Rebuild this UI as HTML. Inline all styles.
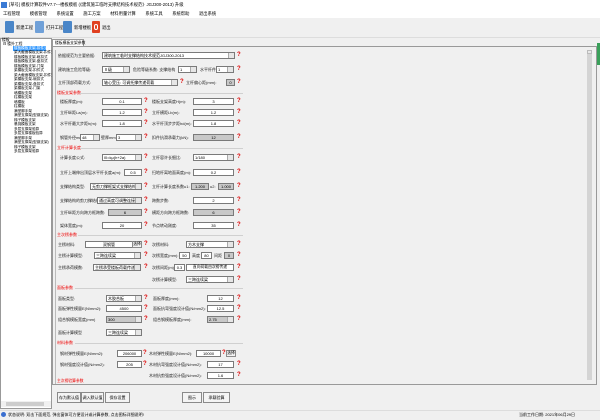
<!DOCTYPE html>
<html><head><meta charset="utf-8">
<style>
*{margin:0;padding:0;box-sizing:border-box}
body{width:600px;height:420px;background:#f0f0f0;position:relative;overflow:hidden;font-family:"Liberation Sans","Noto Sans CJK SC",sans-serif;font-size:4px;color:#000;line-height:1}
div,span{position:absolute;white-space:nowrap}
.l{font-size:4px;color:#222}
.f{background:#fff;border:1px solid #7a7a7a;height:7px;font-size:4px;text-align:center;line-height:5px}
.g{background:#c8c8c8;border:1px solid #7a7a7a;height:7px;font-size:4px;text-align:center;line-height:5px}
.s{background:#fff;border:1px solid #7a7a7a;height:7px;font-size:4px;line-height:5px;padding-left:1px;text-align:left;overflow:hidden}
.s::after{content:"";position:absolute;right:0;top:0;width:5px;height:5px;background:#e6e6e6;border-left:1px solid #aaa}
.q{width:4px;height:7px;color:#d00;font-size:6px;font-weight:bold;line-height:7px}
.sec{color:#e00;font-size:4px}
.gl{height:1px;background:#d0d0d0;left:56px;width:187px}
.tr{font-size:3.6px;left:14px}
.btn{border:1px solid #8a8a8a;background:#f4f4f4;height:11px;font-size:4px;line-height:9px;text-align:center}
</style></head><body>
<!-- title -->
<div style="left:0;top:0;width:600px;height:10px;background:#fff"></div>
<div style="left:1px;top:2px;width:6px;height:6px;background:#3a7bd5"></div>
<div style="left:9px;top:3px;font-size:4.3px">[草号] 模板计算软件V7.7---楼板模板 (《建筑施工临时支撑结构技术规范》JGJ300-2013) 升级</div>
<!-- menu -->
<div style="left:0;top:10px;width:600px;height:8px;background:#fff"></div>
<div style="left:3px;top:12px;font-size:4.3px;word-spacing:2px">工程管理&nbsp;&nbsp; 模板管理&nbsp;&nbsp; 系统设置&nbsp;&nbsp; 施工方案&nbsp;&nbsp; 材料用量计算&nbsp;&nbsp; 系统工具&nbsp;&nbsp; 系统帮助&nbsp;&nbsp; 退出系统</div>
<!-- toolbar -->
<div style="left:0;top:18px;width:600px;height:20px;background:#f0f0f0;border-bottom:1px solid #ddd"></div>
<div style="left:5px;top:21px;width:9px;height:12px;background:#4a86c8;border-radius:1px"></div>
<div style="left:16px;top:26px;font-size:4.3px">新建工程</div>
<div style="left:35px;top:21px;width:9px;height:12px;background:#6fa0d8;border-radius:1px"></div>
<div style="left:46px;top:26px;font-size:4.3px">打开工程</div>
<div style="left:63px;top:21px;width:9px;height:12px;background:#4a86c8;border-radius:1px"></div>
<div style="left:74px;top:26px;font-size:4.3px">新增楼板</div>
<div style="left:92px;top:21px;width:8px;height:12px;background:#e04020;border-radius:1px"></div>
<div style="left:94px;top:24px;width:4px;height:6px;border:1px solid #fff;border-radius:2px"></div>
<div style="left:102px;top:26px;font-size:4.3px">退出</div>
<!-- left tree -->
<div style="left:0;top:38px;width:52px;height:371px;background:#fff;border:1px solid #999"></div>
<div style="left:2px;top:39px;font-size:3.8px">楼板</div>
<div style="left:3px;top:43px;font-size:3.8px">⊟ 楼外工程</div>
<div style="left:13px;top:46px;width:33px;height:5px;background:#3399ff"></div>
<div class="tr" style="top:46.7px;color:#fff">楼板模板支架-扣件式</div>
<div class="tr" style="top:51px">梁大截面模板支架-扣件式</div>
<div class="tr" style="top:55.5px">楼板模板支架-碗扣式</div>
<div class="tr" style="top:60px">楼板模板支架-盘扣式</div>
<div class="tr" style="top:64.5px">楼板模板支架-门架</div>
<div class="tr" style="top:69px">梁模板支架-扣件式</div>
<div class="tr" style="top:73.5px">梁大截面模板支架-扣件式</div>
<div class="tr" style="top:78px">梁模板支架-碗扣式</div>
<div class="tr" style="top:82.5px">梁模板支架-盘扣式</div>
<div class="tr" style="top:87px">梁模板支架-门架</div>
<div class="tr" style="top:91.5px">墙模板支架</div>
<div class="tr" style="top:96px">柱模板支架</div>
<div class="tr" style="top:100.5px">墙模板</div>
<div class="tr" style="top:105px">柱模板</div>
<div class="tr" style="top:109.5px">满堂脚手架</div>
<div class="tr" style="top:114px">满堂支撑架(型钢支架)</div>
<div class="tr" style="top:118.5px">梯子模板支架</div>
<div class="tr" style="top:123px">悬挑模板支架</div>
<div class="tr" style="top:127.5px">多层支撑架验算</div>
<div class="tr" style="top:132px">多层支撑楼板验算</div>
<div class="tr" style="top:136.5px">满堂脚手架</div>
<div class="tr" style="top:141px">满堂支撑架(型钢支架)</div>
<div class="tr" style="top:145.5px">梯子模板支架</div>
<div class="tr" style="top:150px">多层支撑架验算</div>
<div style="left:1px;top:401px;width:50px;height:6px;background:#f0f0f0"></div>
<div style="left:6px;top:402px;width:38px;height:4px;background:#cdcdcd"></div>
<!-- tab -->
<div style="left:52px;top:39px;width:32px;height:8px;background:#fff;border:1px solid #999;border-bottom:none;font-size:3.8px;line-height:6px;padding-left:2px">楼板模板支架参数</div>
<!-- content frame -->
<div style="left:52px;top:46px;width:545px;height:339px;border:1px solid #999;background:#f0f0f0"></div>
<div style="left:587px;top:50px;width:5px;height:330px;background:#d4d4d4"></div>
<div style="left:587px;top:50px;width:5px;height:4px;background:#e8e8e8;border:1px solid #bbb"></div>
<div style="left:597px;top:43px;width:3px;height:22px;background:#3aa05a"></div>
<div style="left:55px;top:50px;width:190px;height:334px;border-left:1px solid #bbb"></div>

<!-- rows -->
<div class="l" style="left:58px;top:54px">依据规范为主要依据:</div>
<div class="s" style="left:102px;top:52px;width:133px">建筑施工临时支撑结构技术规范JGJ300-2013</div><div class="q" style="left:237px;top:52px">?</div>

<div class="l" style="left:58px;top:68px">建筑施工危险等级:</div>
<div class="s" style="left:102px;top:66px;width:28px">Ⅱ级</div>
<div class="l" style="left:133px;top:68px">危险等级系数: 支撑结构</div>
<div class="s" style="left:178px;top:66px;width:19px">1</div>
<div class="l" style="left:200px;top:68px">水平杆件</div>
<div class="s" style="left:216px;top:66px;width:18px">1</div><div class="q" style="left:237px;top:66px">?</div>

<div class="l" style="left:58px;top:81px">立杆顶部荷载方式:</div>
<div class="s" style="left:102px;top:79px;width:76px">轴心受压: 可调托撑传递荷载</div><div class="q" style="left:180px;top:79px">?</div>
<div class="l" style="left:186px;top:81px">立杆偏心距(mm):</div>
<div class="g" style="left:226px;top:79px;width:9px">0</div><div class="q" style="left:237px;top:79px">?</div>

<div class="sec" style="left:57px;top:91px">楼板支架参数</div><div class="gl" style="top:93px;left:80px;width:163px"></div>
<div class="l" style="left:60px;top:100px">楼板厚度(m):</div><div class="f" style="left:102px;top:98px;width:40px">0.1</div><div class="q" style="left:144px;top:98px">?</div>
<div class="l" style="left:152px;top:100px">楼板支架高度H(m):</div><div class="f" style="left:193px;top:98px;width:41px">3</div><div class="q" style="left:237px;top:98px">?</div>
<div class="l" style="left:60px;top:111px">立杆纵距La(m):</div><div class="f" style="left:102px;top:109px;width:40px">1.2</div><div class="q" style="left:144px;top:109px">?</div>
<div class="l" style="left:152px;top:111px">立杆横距Lb(m):</div><div class="f" style="left:193px;top:109px;width:41px">1.2</div><div class="q" style="left:237px;top:109px">?</div>
<div class="l" style="left:60px;top:122px">水平杆最大步距h(m):</div><div class="f" style="left:102px;top:120px;width:40px">1.8</div><div class="q" style="left:144px;top:120px">?</div>
<div class="l" style="left:152px;top:122px">水平杆顶步步距hd(m):</div><div class="f" style="left:193px;top:120px;width:41px">1.8</div><div class="q" style="left:237px;top:120px">?</div>
<div class="l" style="left:60px;top:136px">钢管外径mm</div><div class="s" style="left:80px;top:134px;width:20px">48</div>
<div class="l" style="left:101px;top:136px">壁厚mm</div><div class="s" style="left:116px;top:134px;width:26px">3</div><div class="q" style="left:144px;top:134px">?</div>
<div class="l" style="left:152px;top:136px">扣件抗滑承载力(kN):</div><div class="g" style="left:193px;top:134px;width:41px">12</div><div class="q" style="left:237px;top:134px">?</div>

<div class="sec" style="left:57px;top:146px">立杆计算长度</div><div class="gl" style="top:148px;left:80px;width:163px"></div>
<div class="l" style="left:60px;top:156px">计算长度公式:</div><div class="s" style="left:102px;top:154px;width:40px">l0=kμ(h+2a)</div><div class="q" style="left:144px;top:154px">?</div>
<div class="l" style="left:152px;top:156px">立杆容许长细比:</div><div class="s" style="left:193px;top:154px;width:41px">1/180</div><div class="q" style="left:237px;top:154px">?</div>
<div class="l" style="left:60px;top:171px">立杆上端伸出顶层水平杆长度a(m):</div><div class="f" style="left:124px;top:169px;width:18px">0.5</div><div class="q" style="left:144px;top:169px">?</div>
<div class="l" style="left:152px;top:171px">扫地杆离地面高度(m):</div><div class="f" style="left:193px;top:169px;width:41px">0.2</div><div class="q" style="left:237px;top:169px">?</div>
<div class="l" style="left:60px;top:185px">支撑结构类型:</div><div class="s" style="left:90px;top:183px;width:52px">无剪刀撑框架式支撑结构</div><div class="q" style="left:144px;top:183px">?</div>
<div class="l" style="left:152px;top:185px">立杆计算长度系数u1:</div><div class="g" style="left:191px;top:183px;width:18px">1.200</div>
<div class="l" style="left:210px;top:185px">u2:</div><div class="g" style="left:218px;top:183px;width:16px">1.000</div><div class="q" style="left:237px;top:183px">?</div>
<div class="l" style="left:60px;top:199px">支撑结构的剪刀撑结构</div><div class="s" style="left:97px;top:197px;width:45px">通过高度可调整连接</div><div class="q" style="left:144px;top:197px">?</div>
<div class="l" style="left:152px;top:199px">跨数步数:</div><div class="f" style="left:193px;top:197px;width:41px">2</div><div class="q" style="left:237px;top:197px">?</div>
<div class="l" style="left:60px;top:211px">立杆纵距方向跨方框跨数:</div><div class="g" style="left:108px;top:209px;width:34px">6</div><div class="q" style="left:144px;top:209px">?</div>
<div class="l" style="left:152px;top:211px">横距方向跨方框跨数:</div><div class="g" style="left:193px;top:209px;width:41px">6</div><div class="q" style="left:237px;top:209px">?</div>
<div class="l" style="left:60px;top:224px">架体宽度(m):</div><div class="f" style="left:102px;top:222px;width:40px">20</div><div class="q" style="left:144px;top:222px">?</div>
<div class="l" style="left:152px;top:224px">节点转动刚度:</div><div class="f" style="left:193px;top:222px;width:41px">35</div><div class="q" style="left:237px;top:222px">?</div>

<div class="sec" style="left:57px;top:233px">主次楞参数</div><div class="gl" style="top:235px;left:78px;width:165px"></div>
<div class="l" style="left:58px;top:243px">主楞材料:</div><div class="f" style="left:85px;top:241px;width:48px">双钢管</div>
<div class="btn" style="left:132px;top:241px;width:10px;height:7px;line-height:5px;font-size:3.8px">选择</div><div class="q" style="left:144px;top:241px">?</div>
<div class="l" style="left:152px;top:243px">次楞材料:</div><div class="s" style="left:186px;top:241px;width:48px">方木支撑</div><div class="q" style="left:237px;top:241px">?</div>
<div class="l" style="left:58px;top:254px">主楞计算模型:</div><div class="s" style="left:94px;top:252px;width:47px">三跨连续梁</div><div class="q" style="left:144px;top:252px">?</div>
<div class="l" style="left:152px;top:254px">次楞宽度(mm):</div><div class="f" style="left:179px;top:252px;width:11px">50</div>
<div class="l" style="left:192px;top:254px">高度</div><div class="f" style="left:201px;top:252px;width:11px">80</div>
<div class="l" style="left:214px;top:254px">间距</div><div class="g" style="left:224px;top:252px;width:10px">0</div><div class="q" style="left:237px;top:252px">?</div>
<div class="l" style="left:58px;top:266px">主楞承荷模数:</div><div class="s" style="left:93px;top:264px;width:48px">主楞承受楼板荷载传递</div><div class="q" style="left:144px;top:264px">?</div>
<div class="l" style="left:152px;top:266px">次楞间距(m):</div><div class="f" style="left:174px;top:264px;width:11px">0.3</div>
<div class="f" style="left:186px;top:264px;width:48px;font-size:3.8px">直向荷载由次楞传递</div><div class="q" style="left:237px;top:264px">?</div>
<div class="l" style="left:152px;top:278px">次楞计算模型:</div><div class="s" style="left:186px;top:276px;width:48px">三跨连续梁</div><div class="q" style="left:237px;top:276px">?</div>

<div class="sec" style="left:57px;top:286px">面板参数</div><div class="gl" style="top:288px;left:75px;width:168px"></div>
<div class="l" style="left:58px;top:297px">面板类型:</div><div class="s" style="left:106px;top:295px;width:36px">木胶合板</div><div class="q" style="left:144px;top:295px">?</div>
<div class="l" style="left:153px;top:297px">面板厚度(mm):</div><div class="f" style="left:207px;top:295px;width:27px">12</div><div class="q" style="left:237px;top:295px">?</div>
<div class="l" style="left:58px;top:307px">面板弹性模量E(N/mm2):</div><div class="f" style="left:106px;top:305px;width:36px">4500</div><div class="q" style="left:144px;top:305px">?</div>
<div class="l" style="left:153px;top:307px">面板抗弯强度设计值(N/mm2):</div><div class="f" style="left:207px;top:305px;width:27px">12.5</div><div class="q" style="left:237px;top:305px">?</div>
<div class="l" style="left:58px;top:318px">组合钢模板宽度(mm)</div><div class="s" style="left:106px;top:316px;width:36px;background:#c8c8c8">300</div><div class="q" style="left:144px;top:316px">?</div>
<div class="l" style="left:153px;top:318px">组合钢模板厚度(mm):</div><div class="s" style="left:207px;top:316px;width:27px;background:#c8c8c8">2.75</div><div class="q" style="left:237px;top:316px">?</div>
<div class="l" style="left:58px;top:331px">面板计算模型</div><div class="s" style="left:106px;top:329px;width:36px">三跨连续梁</div>

<div class="sec" style="left:57px;top:341px">材料参数</div><div class="gl" style="top:343px;left:75px;width:168px"></div>
<div class="l" style="left:60px;top:352px">钢材弹性模量E(N/mm2):</div><div class="f" style="left:117px;top:350px;width:25px">206000</div><div class="q" style="left:143px;top:350px">?</div>
<div class="l" style="left:149px;top:352px">木材弹性模量E(N/mm2):</div><div class="f" style="left:196px;top:350px;width:25px">10000</div>
<div class="btn" style="left:226px;top:350px;width:10px;height:7px;line-height:5px;font-size:3.8px">选择</div><div class="q" style="left:222px;top:350px">?</div>
<div class="l" style="left:60px;top:363px">钢材强度设计值(N/mm2):</div><div class="f" style="left:117px;top:361px;width:25px">205</div><div class="q" style="left:143px;top:361px">?</div>
<div class="l" style="left:149px;top:363px">木材抗弯强度设计值(N/mm2):</div><div class="f" style="left:207px;top:361px;width:27px">17</div><div class="q" style="left:237px;top:361px">?</div>
<div class="l" style="left:149px;top:374px">木材抗剪强度设计值(N/mm2):</div><div class="f" style="left:207px;top:372px;width:27px">1.6</div><div class="q" style="left:237px;top:372px">?</div>
<div class="sec" style="left:57px;top:380px;font-size:3.8px">主次楞验算参数</div>

<!-- buttons -->
<div class="btn" style="left:57px;top:392px;width:24px">存为默认值</div>
<div class="btn" style="left:81px;top:392px;width:23px">调入默认值</div>
<div class="btn" style="left:105px;top:392px;width:25px">保存设置</div>
<div class="btn" style="left:182px;top:392px;width:20px">图示</div>
<div class="btn" style="left:203px;top:392px;width:27px">承载验算</div>

<!-- status -->
<div style="left:0;top:410px;width:600px;height:10px;background:#f0f0f0;border-top:1px solid #ddd"></div>
<div style="left:1px;top:412px;width:5px;height:5px;border-radius:50%;background:#3a6fd0"></div>
<div style="left:8px;top:413px;font-size:4px">状态说明: 双击下面规范, 弹出窗体可方便设计或计算参数, 点击图标详细说明!</div>
<div style="left:519px;top:413px;font-size:4px">当前工作日期: 2021年06月29日</div>
</body></html>
